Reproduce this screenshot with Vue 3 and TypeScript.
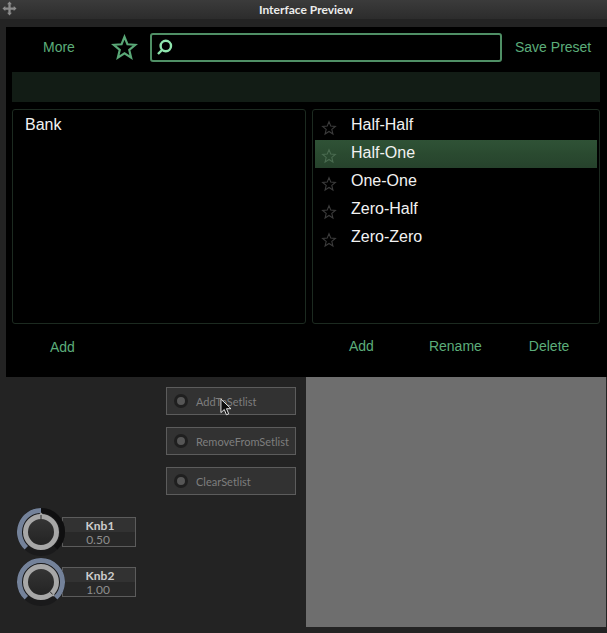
<script setup lang="ts">
interface Knob {
  name: string
  value: number
}

const presets = ['Half-Half', 'Half-One', 'One-One', 'Zero-Half', 'Zero-Zero']
const setlistButtons = ['AddToSetlist', 'RemoveFromSetlist', 'ClearSetlist']
const knobs: Knob[] = [
  { name: 'Knb1', value: 0.5 },
  { name: 'Knb2', value: 1 },
]

const starPath = 'M12 2.5l2.6 6.6 7 .5-5.4 4.5 1.7 6.9-5.9-3.8-5.9 3.8 1.7-6.9-5.4-4.5 7-.5z'

// knob sweep runs from 7 o'clock to 5 o'clock, 274 degrees in total
function polar(radius: number, deg: number) {
  const rad = ((deg - 90) * Math.PI) / 180
  return { x: 24 + radius * Math.cos(rad), y: 24 + radius * Math.sin(rad) }
}

function arc(radius: number, from: number, to: number) {
  const a = polar(radius, from)
  const b = polar(radius, to)
  const large = to - from > 180 ? 1 : 0
  return `M${a.x} ${a.y}A${radius} ${radius} 0 ${large} 1 ${b.x} ${b.y}`
}

function valueAngle(value: number) {
  return -137 + value * 274
}

function pointer(value: number) {
  const angle = valueAngle(value)
  const tip = polar(19.5, angle)
  const left = polar(16, angle - 15)
  const right = polar(16, angle + 15)
  return `M${left.x} ${left.y}L${tip.x} ${tip.y}L${right.x} ${right.y}Z`
}

function notch(value: number) {
  const angle = valueAngle(value)
  const from = polar(13, angle)
  const to = polar(17, angle)
  return `M${from.x} ${from.y}L${to.x} ${to.y}`
}
</script>

<template>
  <div class="window">
    <header class="titlebar">
      <svg class="move-icon" viewBox="0 0 16 16" width="15" height="15">
        <path d="M8 .5l2.6 3H9.2v3.3h3.3V5.4l3 2.6-3 2.6V9.2H9.2v3.3h1.4L8 15.5l-2.6-3h1.4V9.2H3.5v1.4L.5 8l3-2.6v1.4h3.3V3.5H5.4z" />
      </svg>
      <span class="title">Interface Preview</span>
    </header>

    <section class="browser">
      <div class="toolbar">
        <span class="link more">More</span>
        <svg class="fav-star" viewBox="0 0 24 24" width="27" height="27">
          <path :d="starPath" />
        </svg>
        <div class="search">
          <svg viewBox="0 0 18 18" width="18" height="18">
            <circle cx="8.8" cy="7" r="5.2" />
            <path d="M5 11L1 15" />
          </svg>
        </div>
        <span class="link save">Save Preset</span>
      </div>

      <div class="banner"></div>

      <div class="lists">
        <div class="list banks">
          <div class="bank">Bank</div>
        </div>
        <div class="list">
          <div
            v-for="preset in presets"
            :key="preset"
            class="preset"
            :class="{ selected: preset === 'Half-One' }"
          >
            <svg class="row-star" viewBox="0 0 24 24" width="16" height="16">
              <path :d="starPath" />
            </svg>
            <span>{{ preset }}</span>
          </div>
        </div>
      </div>

      <div class="actions">
        <div class="bank-actions">
          <span class="link">Add</span>
        </div>
        <div class="preset-actions">
          <span class="link act-add">Add</span>
          <span class="link act-rename">Rename</span>
          <span class="link act-delete">Delete</span>
        </div>
      </div>
    </section>

    <section class="lower">
      <div class="controls">
        <div class="setlist">
          <div v-for="label in setlistButtons" :key="label" class="set-btn">
            <span class="led"></span>
            <span>{{ label }}</span>
          </div>
        </div>
        <div class="knobs">
          <div v-for="knob in knobs" :key="knob.name" class="knob-row">
            <svg class="knob" viewBox="0 0 48 48" width="48" height="48">
              <defs>
                <linearGradient id="cap-fill" x1="0" y1="0" x2="0" y2="1">
                  <stop offset="0" stop-color="#363636" />
                  <stop offset="1" stop-color="#222222" />
                </linearGradient>
              </defs>
              <circle cx="24" cy="24" r="24" fill="#1a1a1b" />
              <path class="track" :d="arc(21.5, -137, 137)" />
              <path class="fill" :d="arc(21.5, -137, valueAngle(knob.value))" />
              <circle class="cap" cx="24" cy="24" r="15.5" fill="url(#cap-fill)" />
              <path class="needle" :d="pointer(knob.value)" />
              <path class="notch" :d="notch(knob.value)" />
            </svg>
            <div class="readout">
              <div class="knob-name">{{ knob.name }}</div>
              <div class="knob-value">{{ knob.value.toFixed(2) }}</div>
            </div>
          </div>
        </div>
      </div>
      <div class="canvas"></div>
    </section>

    <svg class="cursor" viewBox="0 0 14 20" width="13" height="19">
      <path d="M1 1v14.5l3.6-3.3 2.3 5.6 2.5-1-2.4-5.5h4.8z" />
    </svg>
  </div>
</template>

<style>
html,
body {
  margin: 0;
  background: #232323;
}
</style>

<style scoped>
.window {
  position: relative;
  width: 607px;
  height: 633px;
  overflow: hidden;
  background: #232323;
  font-family: "Liberation Sans", Arial, sans-serif;
}

.titlebar {
  display: flex;
  align-items: center;
  justify-content: center;
  position: relative;
  height: 19px;
  margin-bottom: 8px;
  padding-left: 5px;
  background: linear-gradient(#3b3b3b, #2c2c2c);
}

.move-icon {
  position: absolute;
  left: 2px;
  top: 1px;
  fill: #8c8c8c;
}

.title {
  font-family: Lato, sans-serif;
  font-size: 12px;
  font-weight: 700;
  color: #ececec;
}

.browser {
  height: 350px;
  margin-left: 6px;
  background: #000;
  display: flex;
  flex-direction: column;
}

.toolbar {
  display: flex;
  align-items: center;
  height: 29px;
  margin-top: 6px;
}

.toolbar .link {
  margin-top: -2px;
}

.link {
  font-size: 14px;
  color: #5cad7a;
}

.more {
  width: 30px;
  margin-left: 37px;
}

.fav-star {
  margin-left: 38px;
  fill: none;
  stroke: #5aa877;
  stroke-width: 1.9;
}

.search {
  box-sizing: border-box;
  display: flex;
  align-items: center;
  width: 352px;
  height: 29px;
  margin-left: 12px;
  padding-left: 5px;
  border: 2px solid #4f8f65;
  border-radius: 3px;
}

.search svg {
  fill: none;
  stroke: #8fe6ae;
  stroke-width: 2.4;
}

.save {
  margin-left: 13px;
}

.banner {
  width: 588px;
  height: 30px;
  margin: 10px 0 7px 6px;
  background: #121c15;
}

.lists {
  display: flex;
  gap: 6px;
  height: 215px;
  margin-left: 6px;
}

.list {
  box-sizing: border-box;
  width: 288px;
  padding: 2px;
  border: 1px solid #1c2a20;
  border-radius: 3px;
}

.banks {
  width: 294px;
}

.bank {
  height: 28px;
  line-height: 25px;
  padding-left: 10px;
  font-size: 16px;
  color: #f2f2f2;
}

.preset {
  display: flex;
  align-items: center;
  height: 28px;
  font-size: 16px;
  color: #f2f2f2;
}

.preset span {
  margin-top: -2px;
}

.preset.selected {
  background: linear-gradient(#2f5236, #2a4a30 50%, #26422c);
}

.row-star {
  margin: 4px 14px 0 6px;
  fill: none;
  stroke: #3c3c3c;
  stroke-width: 1.6;
}

.selected .row-star {
  stroke: #4a6b50;
}

.actions {
  display: flex;
  margin-top: 14px;
}

.bank-actions {
  width: 306px;
  padding-left: 44px;
  box-sizing: border-box;
}

.preset-actions {
  display: flex;
}

.act-add {
  margin-left: 37px;
}

.act-rename {
  margin-left: 55px;
}

.act-delete {
  margin-left: 47px;
}

.lower {
  display: flex;
  height: 250px;
}

.controls {
  width: 306px;
  flex: none;
}

.setlist {
  display: flex;
  flex-direction: column;
  gap: 12px;
  padding: 10px 0 0 166px;
}

.set-btn {
  box-sizing: border-box;
  display: flex;
  align-items: center;
  width: 130px;
  height: 28px;
  padding-left: 7px;
  border: 1px solid #5c5c5c;
  background: #323232;
  font-family: Lato, sans-serif;
  font-size: 11px;
  color: #7e7e7e;
}

.led {
  box-sizing: border-box;
  width: 14px;
  height: 14px;
  margin-right: 8px;
  border: 3px solid #1f1f1f;
  border-radius: 50%;
  background: #565656;
}

.knobs {
  display: flex;
  flex-direction: column;
  gap: 2px;
  padding: 13px 0 0 17px;
}

.knob-row {
  display: flex;
  align-items: center;
  height: 48px;
}

.knob {
  position: relative;
  z-index: 1;
  flex: none;
}

.track {
  fill: none;
  stroke: #0f0f10;
  stroke-width: 5;
}

.fill {
  fill: none;
  stroke: #74829a;
  stroke-width: 5;
}

.cap {
  stroke: #a7a7a7;
  stroke-width: 5;
}

.needle {
  fill: #a7a7a7;
}

.notch {
  fill: none;
  stroke: #2a2a2a;
  stroke-width: 1;
}

.readout {
  box-sizing: border-box;
  width: 74px;
  height: 30px;
  margin-left: -3px;
  padding: 0 2px 0 4px;
  border: 1px solid #5c5c5c;
  background: linear-gradient(#323232 50%, #282828 50%);
  font-family: Lato, sans-serif;
  text-align: center;
}

.knob-name {
  height: 15px;
  line-height: 15px;
  font-size: 12px;
  font-weight: 700;
  color: #cdcdcd;
}

.knob-value {
  margin-right: 4px;
  line-height: 13px;
  font-size: 12px;
  color: #8e8e8e;
}

.canvas {
  width: 300px;
  background: #6e6e6e;
}

.cursor {
  position: absolute;
  left: 220px;
  top: 398px;
  fill: #0c0c0c;
  stroke: #f2f2f2;
  stroke-width: 1;
}
</style>
